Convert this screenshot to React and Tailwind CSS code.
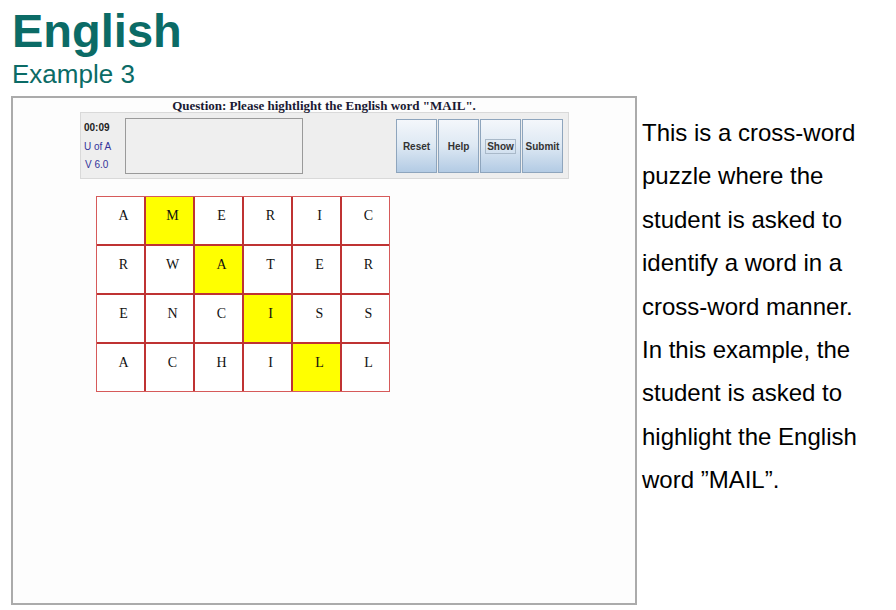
const grid = [
  ["A", "M", "E", "R", "I", "C"],
  ["R", "W", "A", "T", "E", "R"],
  ["E", "N", "C", "I", "S", "S"],
  ["A", "C", "H", "I", "L", "L"],
];

const picked = { "0-1": true, "1-2": true, "2-3": true, "3-4": true };

const ToolButton = ({ label, focused }) => (
  <button
    type="button"
    className="w-[41px] h-[54px] border border-[#8ea5bd] bg-gradient-to-b from-[#f4f7fb] via-[#dde8f3] to-[#b3cbe4] flex items-center justify-center text-[10px] font-bold text-[#333333] font-['Liberation_Sans',Arial,sans-serif]"
  >
    <span className={focused ? "border border-[#a9b9c9] px-[1px] leading-[13px]" : "leading-[13px]"}>
      {label}
    </span>
  </button>
);

const App = () => {
  return (
    <div className="w-[896px] h-[610px] bg-white overflow-hidden font-['Liberation_Sans',Arial,sans-serif]">
      <header className="pl-[12px] pt-[8px] text-[#0b6b66]">
        <h1 className="text-[47px] leading-[46px] font-bold">English</h1>
        <p className="mt-[8px] text-[26px] leading-[25px]">Example 3</p>
      </header>

      <div className="flex mt-[9px]">
        <section className="ml-[11px] w-[626px] h-[509px] border-2 border-[#ababab] bg-[#fdfdfd]">
          <p className="h-[14px] pt-[1px] leading-[14px] text-center text-[13px] font-bold text-[#1a1a33] font-['Liberation_Serif','Times_New_Roman',serif]">
            Question: Please hightlight the English word "MAIL".
          </p>

          <div className="ml-[67px] w-[489px] h-[67px] border border-[#d9d9d9] bg-[#eeeeee] flex">
            <div className="w-[44px] pl-[3px] pt-[6px] text-[10px] leading-[18.5px]">
              <div className="font-bold text-[#222222]">00:09</div>
              <div className="text-[#33339a]">U of A</div>
              <div className="text-[#33339a] pl-[1px]">V 6.0</div>
            </div>
            <div className="mt-[5px] w-[178px] h-[56px] border border-[#9a9a9a] bg-[#efefef]" />
            <div className="ml-auto mr-[5px] mt-[6px] flex gap-[1px]">
              <ToolButton label="Reset" />
              <ToolButton label="Help" />
              <ToolButton label="Show" focused />
              <ToolButton label="Submit" />
            </div>
          </div>

          <div className="ml-[83px] mt-[17px] w-[294px] border border-[#d65a5a] bg-[#bf3333] grid grid-cols-6 gap-[2px]">
            {grid.map((row, r) =>
              row.map((ch, c) => (
                <div
                  key={`${r}-${c}`}
                  className={`h-[47px] flex items-center justify-center pl-[6px] pb-[10px] text-[14px] text-[#111111] font-['Liberation_Serif','Times_New_Roman',serif] ${
                    picked[`${r}-${c}`] ? "bg-[#ffff00]" : "bg-white"
                  }`}
                >
                  {ch}
                </div>
              ))
            )}
          </div>
        </section>

        <div className="ml-[5px] w-[230px] pt-[15px] text-[24px] leading-[43.4px] text-black">
          This is a cross-word puzzle where the student is asked to identify a word in a cross-word manner. In this example, the student is asked to highlight the English word ”MAIL”.
        </div>
      </div>
    </div>
  );
};

export default App;
